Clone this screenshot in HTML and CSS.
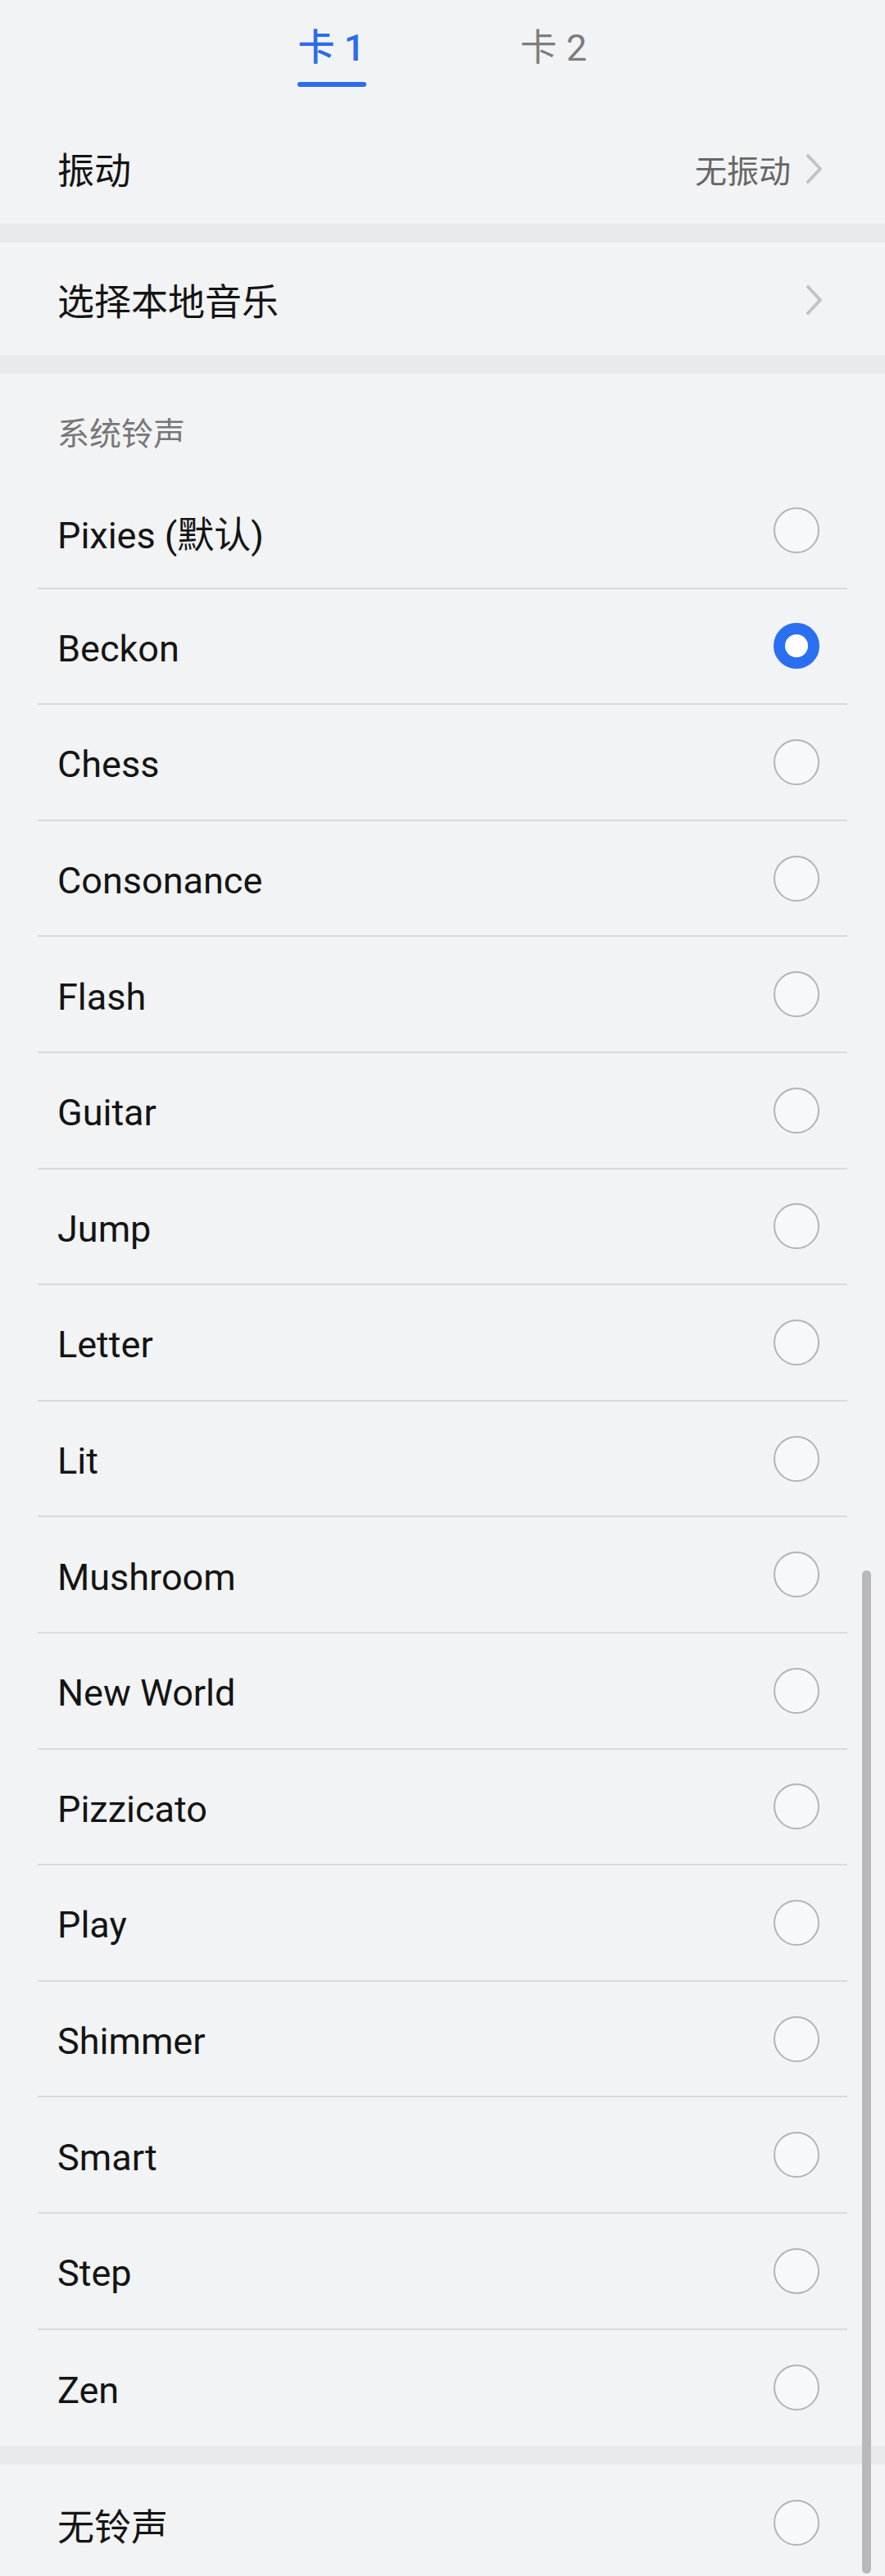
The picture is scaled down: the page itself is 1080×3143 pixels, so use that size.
FILE: index.html
```html
<!DOCTYPE html>
<html lang="zh-CN">
<head>
    <meta charset="UTF-8">
    <meta name="viewport" content="width=device-width, initial-scale=1.0">
    <title>铃声</title>
    <link rel="stylesheet" href="styles.css">
</head>
<body>
    <div class="tabs">
        <div class="tab active"><span>卡 1</span><i class="bar"></i></div>
        <div class="tab"><span>卡 2</span><i class="bar"></i></div>
    </div>

    <div class="option">
        <span class="label">振动</span>
        <span class="value">无振动</span>
        <svg class="chevron" viewBox="0 0 20 36"><polyline points="2,2 17,18 2,34"/></svg>
    </div>
    <div class="gap"></div>
    <div class="option">
        <span class="label">选择本地音乐</span>
        <svg class="chevron" viewBox="0 0 20 36"><polyline points="2,2 17,18 2,34"/></svg>
    </div>
    <div class="gap"></div>

    <div class="section-title">系统铃声</div>
    <div class="list">
        <div class="item"><span>Pixies (默认)</span><i class="radio"></i></div>
        <div class="item"><span>Beckon</span><i class="radio checked"></i></div>
        <div class="item"><span>Chess</span><i class="radio"></i></div>
        <div class="item"><span>Consonance</span><i class="radio"></i></div>
        <div class="item"><span>Flash</span><i class="radio"></i></div>
        <div class="item"><span>Guitar</span><i class="radio"></i></div>
        <div class="item"><span>Jump</span><i class="radio"></i></div>
        <div class="item"><span>Letter</span><i class="radio"></i></div>
        <div class="item"><span>Lit</span><i class="radio"></i></div>
        <div class="item"><span>Mushroom</span><i class="radio"></i></div>
        <div class="item"><span>New World</span><i class="radio"></i></div>
        <div class="item"><span>Pizzicato</span><i class="radio"></i></div>
        <div class="item"><span>Play</span><i class="radio"></i></div>
        <div class="item"><span>Shimmer</span><i class="radio"></i></div>
        <div class="item"><span>Smart</span><i class="radio"></i></div>
        <div class="item"><span>Step</span><i class="radio"></i></div>
        <div class="item"><span>Zen</span><i class="radio"></i></div>
    </div>
    <div class="gap"></div>
    <div class="list">
        <div class="item"><span>无铃声</span><i class="radio"></i></div>
    </div>

    <div class="scrollbar"></div>
</body>
</html>
```

FILE: styles.css
```css
body {
    margin: 0;
    width: 1080px;
    min-height: 3143px;
    position: relative;
    overflow: hidden;
    background: #f2f3f5;
    font-family: Roboto, "Noto Sans CJK SC", sans-serif;
    color: #141414;
}

/* SIM card tabs */
.tabs {
    height: 136px;
    display: flex;
    justify-content: center;
}
.tab {
    width: 271px;
    display: flex;
    flex-direction: column;
    align-items: center;
    padding-top: 29px;
    font-size: 45px;
    line-height: 60px;
    color: #7d7d7d;
}
.tab .bar {
    width: 84px;
    height: 6px;
    margin-top: 11px;
    border-radius: 3px;
}
.tab.active {
    color: #2b6de9;
    font-weight: 500;
}
.tab.active .bar {
    background: #2b6de9;
}

/* top options */
.option {
    height: 137px;
    display: flex;
    align-items: center;
    padding: 2px 76px 0 70px;
    box-sizing: border-box;
    font-size: 45px;
}
.option .label {
    flex: 1;
}
.option .value {
    font-size: 39px;
    color: #666;
    margin-right: 19px;
}
.chevron {
    width: 20px;
    height: 36px;
    fill: none;
    stroke: #c3c3c3;
    stroke-width: 4;
    stroke-linecap: round;
    stroke-linejoin: round;
}
.gap {
    height: 23px;
    background: #e9eaec;
}

/* ringtone list */
.section-title {
    height: 121px;
    box-sizing: border-box;
    padding: 44px 70px 0;
    font-size: 39px;
    line-height: 60px;
    color: #777;
}
.list {
    margin: 0 46px;
}
.item {
    height: 141.6px;
    box-sizing: border-box;
    display: flex;
    align-items: center;
    justify-content: space-between;
    padding: 0 34px 0 24px;
    border-bottom: 2px solid #d9dadc;
    font-size: 45px;
}
.item span {
    margin-top: 6px;
}
.item:last-child {
    border-bottom: none;
}
.radio {
    width: 56px;
    height: 56px;
    box-sizing: border-box;
    border-radius: 50%;
    border: 2.5px solid #b4b4b4;
    background: #f7f8f9;
}
.radio.checked {
    border: 14px solid #2a6ff2;
    background: #fff;
}

.scrollbar {
    position: absolute;
    top: 1916px;
    right: 17px;
    width: 11px;
    height: 1224px;
    border-radius: 6px;
    background: #b8b8ba;
}
```
